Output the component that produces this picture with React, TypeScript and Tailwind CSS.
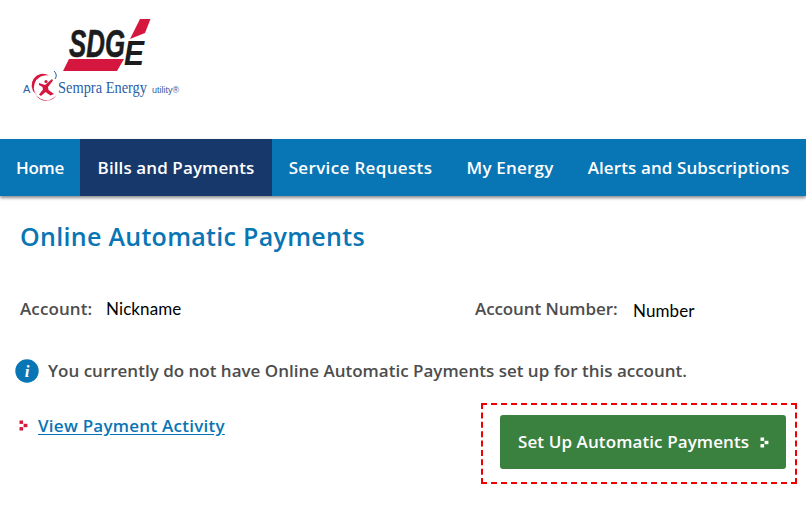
const sans = "font-['Open_Sans',sans-serif]";

function Chevron({ color }: { color: string }) {
  // three blocks forming the little arrow
  return (
    <svg width="9" height="11" viewBox="0 0 9 11" fill={color}>
      <rect x="0.5" y="0.5" width="3.6" height="3.4" />
      <rect x="4.6" y="3.8" width="3.8" height="3.4" />
      <rect x="0.5" y="7.1" width="3.6" height="3.4" />
    </svg>
  );
}

function Logo() {
  return (
    <svg width="190" height="110" viewBox="0 0 190 110" className="block">
      <path d="M140 19 L150.5 19 L145 33 L130 39 Z" fill="#d5173f" />
      <path d="M69 59 L124 59 L117 71 L63 71 Z" fill="#d5173f" />
      <text x="69" y="57" fontFamily="'Liberation Sans',sans-serif" fontSize="38" fontWeight="700" fontStyle="italic" fill="#1c1c1e" stroke="#1c1c1e" strokeWidth="0.6" textLength="56" lengthAdjust="spacingAndGlyphs">SDG</text>
      <text x="124" y="64.5" fontFamily="'Liberation Sans',sans-serif" fontSize="35" fontWeight="700" fontStyle="italic" fill="#1c1c1e" textLength="20" lengthAdjust="spacingAndGlyphs">E</text>
      <text x="23" y="93" fontFamily="'Liberation Sans',sans-serif" fontSize="11" fill="#2a5ea8">A</text>
      {/* sempra emblem: crescent with runner */}
      <path d="M49 75.5 A12.5 12.5 0 1 0 56.5 95 A12 12 0 0 1 35.5 94 A11.5 11.5 0 0 1 49 75.5 Z" fill="#d5173f" />
      <path d="M39 83 L45 85 L52 79 L53 80.5 L48 87 L48.5 90 L54 94 L50.5 95.5 L45.5 92 L41 96 L39 94.5 L43 89.5 L42.5 87 L39 85 Z" fill="#d5173f" />
      <circle cx="46" cy="81.5" r="1.6" fill="#d5173f" />
      <path d="M54 71 Q58 75 55 79" fill="none" stroke="#2a5ea8" strokeWidth="1" />
      <text x="58" y="93" fontFamily="'Liberation Serif',serif" fontSize="17" fill="#2a5ea8" textLength="89" lengthAdjust="spacingAndGlyphs">Sempra Energy</text>
      <text x="152" y="93" fontFamily="'Liberation Sans',sans-serif" fontSize="9.5" fill="#2a5ea8" textLength="27" lengthAdjust="spacingAndGlyphs">utility®</text>
    </svg>
  );
}

const navItems = [
  { label: "Home", width: "w-[80px]", tracking: "tracking-[-0.3px]", active: false },
  { label: "Bills and Payments", width: "w-[192px]", tracking: "tracking-[0.1px]", active: true },
  { label: "Service Requests", width: "w-[177px]", tracking: "tracking-[0.35px]", active: false },
  { label: "My Energy", width: "w-[122px]", tracking: "tracking-[0.2px]", active: false },
  { label: "Alerts and Subscriptions", width: "w-[235px]", tracking: "tracking-[0.1px]", active: false },
];

export default function App() {
  return (
    <div className={`w-[806px] h-[516px] bg-white overflow-hidden ${sans}`}>
      {/* Logo */}
      <div className="h-[139px]">
        <Logo />
      </div>

      {/* Nav */}
      <nav className="flex h-[57px] bg-[#0875b5] shadow-[0_2px_3px_rgba(0,0,0,0.45)] text-white text-[17px] font-semibold">
        {navItems.map((item) => (
          <div
            key={item.label}
            className={`flex items-center justify-center whitespace-nowrap ${item.width} ${item.tracking} ${item.active ? "bg-[#17386b]" : ""}`}
          >
            {item.label}
          </div>
        ))}
      </nav>

      <div className="px-[20px]">
        <h1 className="mt-[23px] text-[25px] leading-[34px] font-semibold text-[#0875b5] tracking-[0.3px]">
          Online Automatic Payments
        </h1>

        <div className="flex mt-[42px] h-[28px] items-center text-[17px] text-[#4d4d4d] font-semibold">
          <div className="w-[455px] flex items-center">
            <span className="w-[87px] tracking-[0.1px]">Account:</span>
            <span className="-ml-[1px] font-['Lato',sans-serif] font-normal text-black text-[17px] tracking-[0.1px]">Nickname</span>
          </div>
          <div className="flex items-center">
            <span className="w-[158px] tracking-[-0.1px]">Account Number:</span>
            <span className="font-['Lato',sans-serif] font-normal text-black text-[17px] mt-[4px] tracking-[0.1px]">Number</span>
          </div>
        </div>
      </div>

      <div className="flex items-center gap-[9px] pl-[15px] mt-[36px] h-[24px] text-[#4d4d4d] text-[17px] font-semibold">
        <svg width="24" height="24" viewBox="0 0 24 24">
          <circle cx="12" cy="12" r="11.7" fill="#0875b5" />
          <text x="12" y="18" textAnchor="middle" fontFamily="'Liberation Serif',serif" fontSize="17" fontWeight="700" fontStyle="italic" fill="#fff">i</text>
        </svg>
        <span className="whitespace-nowrap">You currently do not have Online Automatic Payments set up for this account.</span>
      </div>

      <div className="flex justify-between items-start mt-[20px]">
        <div className="flex items-center gap-[10px] pl-[19px] pt-[10px]">
          <Chevron color="#d5173f" />
          <a href="#" className="text-[17px] font-semibold text-[#0875b5] underline underline-offset-2 tracking-[0.25px]">
            View Payment Activity
          </a>
        </div>
        <div className="w-[316px] h-[81px] mr-[9px] border-2 border-dashed border-[#f00000] pl-[17px] pt-[10px]">
          <button className="w-[286px] h-[54px] rounded-[3px] bg-[#3a803f] text-white text-[17px] font-semibold flex items-center gap-[11px] pl-[18px] tracking-[0.1px]">
            Set Up Automatic Payments
            <Chevron color="#ffffff" />
          </button>
        </div>
      </div>
    </div>
  );
}
